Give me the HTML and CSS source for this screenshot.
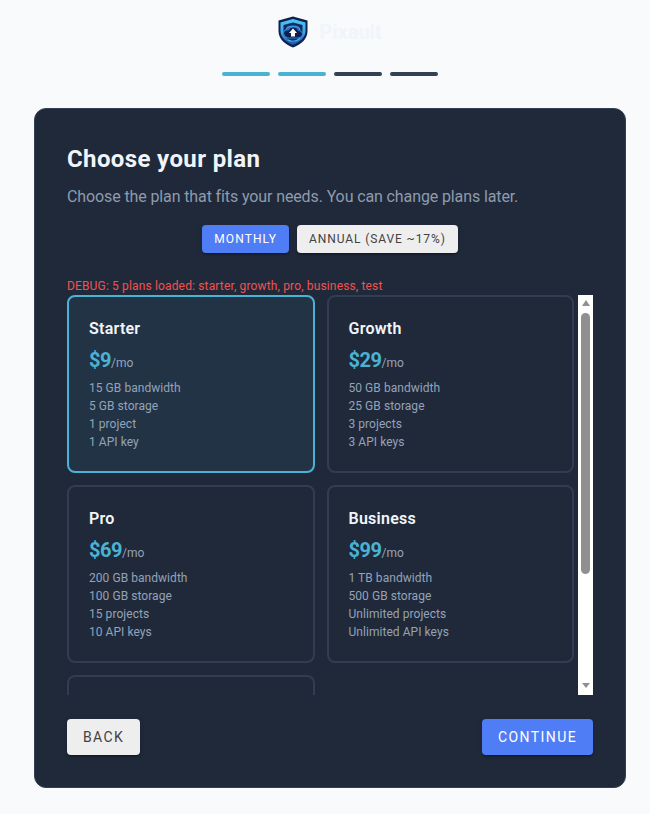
FILE: index.html
```html
<!DOCTYPE html>
<html lang="en">
<head>
<meta charset="utf-8">
<title>Pixault - Choose your plan</title>
<link rel="stylesheet" href="styles.css">
</head>
<body>
<div class="page">
  <header class="brand">
    <svg class="logo" viewBox="0 0 30 32" width="30" height="32" aria-hidden="true">
      <defs>
        <linearGradient id="band" x1="0" y1="0" x2="0" y2="1">
          <stop offset="0" stop-color="#4cc6f5"/>
          <stop offset=".55" stop-color="#38a6ea"/>
          <stop offset="1" stop-color="#1c4fa0"/>
        </linearGradient>
      </defs>
      <path d="M15 .5 L29.500 4.500 V15 C29.500 23 23 28.500 15 31.500 C7 28.500 .5 23 .5 15 V4.500 Z" fill="#10204e"/>
      <path d="M15 3 L27.500 6.500 V15 C27.500 21.500 21.500 26.300 15 29 C8.500 26.300 2.500 21.500 2.500 15 V6.500 Z" fill="url(#band)"/>
      <path d="M15 6.500 L24.500 9 V15 C24.500 20 20 24 15 26 C10 24 5.500 20 5.500 15 V9 Z" fill="#14295f"/>
      <path d="M8 14 C9.500 9 20.500 9 22 14" fill="none" stroke="#3fa0e8" stroke-width="1.300"/>
      <path d="M10 22 C7 21.500 5 19 5.500 16.500 C6 14.500 8 13.500 10 14 C11 12 13 11 15 11 C18 11 20 12.500 20.500 14.500 C23 14.500 25 16.500 24.500 19 C24 21 21.500 22 19 22 Z" fill="#10204e" stroke="#2f7fd6" stroke-width="1.200"/>
      <path d="M15 12.500 L19 17 H17 V20.500 H13 V17 H11 Z" fill="#fff"/>
      <path d="M10 24 C13 25.500 18 25.500 22 22.500" fill="none" stroke="#3fb8f0" stroke-width="1.100"/>
    </svg>
    <span class="brand-name">Pixault</span>
  </header>
  <div class="steps">
    <span class="step done"></span>
    <span class="step done"></span>
    <span class="step"></span>
    <span class="step"></span>
  </div>
  <main class="panel">
    <h1>Choose your plan</h1>
    <p class="sub">Choose the plan that fits your needs. You can change plans later.</p>
    <div class="toggle">
      <button class="btn btn-primary btn-sm">Monthly</button>
      <button class="btn btn-light btn-sm btn-annual">Annual (Save ~17%)</button>
    </div>
    <p class="debug">DEBUG: 5 plans loaded: starter, growth, pro, business, test</p>
    <div class="plans-row">
      <div class="plans">
        <article class="plan selected">
          <h2>Starter</h2>
          <div class="price"><strong>$9</strong><span>/mo</span></div>
          <ul><li>15 GB bandwidth</li><li>5 GB storage</li><li>1 project</li><li>1 API key</li></ul>
        </article>
        <article class="plan">
          <h2>Growth</h2>
          <div class="price"><strong>$29</strong><span>/mo</span></div>
          <ul><li>50 GB bandwidth</li><li>25 GB storage</li><li>3 projects</li><li>3 API keys</li></ul>
        </article>
        <article class="plan">
          <h2>Pro</h2>
          <div class="price"><strong>$69</strong><span>/mo</span></div>
          <ul><li>200 GB bandwidth</li><li>100 GB storage</li><li>15 projects</li><li>10 API keys</li></ul>
        </article>
        <article class="plan">
          <h2>Business</h2>
          <div class="price"><strong>$99</strong><span>/mo</span></div>
          <ul><li>1 TB bandwidth</li><li>500 GB storage</li><li>Unlimited projects</li><li>Unlimited API keys</li></ul>
        </article>
        <article class="plan"></article>
      </div>
      <div class="scrollbar" aria-hidden="true">
        <span class="arrow arrow-up"></span>
        <span class="thumb"></span>
        <span class="arrow arrow-down"></span>
      </div>
    </div>
    <div class="actions">
      <button class="btn btn-light btn-lg">Back</button>
      <button class="btn btn-primary btn-lg">Continue</button>
    </div>
  </main>
</div>
</body>
</html>
```
FILE: styles.css
```css
* { box-sizing: border-box; }
html, body { margin: 0; height: 100%; }
body {
  background: #f8fafc;
  font-family: Roboto, "Liberation Sans", sans-serif;
  overflow: hidden;
}
.page {
  display: flex;
  flex-direction: column;
  align-items: center;
  padding: 16px 0 0 10px;
}
.brand {
  display: flex;
  align-items: center;
  gap: 11px;
  height: 32px;
  margin-bottom: 24px;
}
.logo { display: block; }
.brand-name {
  font-size: 20px;
  font-weight: 700;
  color: #f1f5f9;
}
.steps {
  display: flex;
  gap: 8px;
  margin-bottom: 32px;
}
.step {
  width: 48px;
  height: 4px;
  border-radius: 2px;
  background: #334155;
}
.step.done { background: #4ab3d4; }
.panel {
  width: 592px;
  height: 680px;
  background: #20293a;
  border: 1px solid #334155;
  border-radius: 12px;
  padding: 32px;
}
h1 {
  margin: 0 0 8px;
  font-size: 24px;
  line-height: 36px;
  font-weight: 700;
  letter-spacing: .375px;
  color: #f1f5f9;
}
.sub {
  margin: 0 0 16px;
  font-size: 16px;
  line-height: 24px;
  letter-spacing: -.115px;
  color: #8f9bad;
}
.toggle {
  display: flex;
  justify-content: center;
  gap: 8px;
  margin-bottom: 24px;
}
.btn {
  border: 0;
  border-radius: 4px;
  font-family: inherit;
  font-weight: 400;
  text-transform: uppercase;
  box-shadow: 0 3px 1px -2px rgba(0,0,0,.2), 0 2px 2px 0 rgba(0,0,0,.14), 0 1px 5px 0 rgba(0,0,0,.12);
}
.btn-sm {
  height: 28px;
  padding: 0 12px;
  font-size: 12px;
  letter-spacing: 1.1px;
}
.btn-annual { letter-spacing: .9px; }
.btn-lg {
  height: 36px;
  padding: 0 16px;
  font-size: 14px;
  letter-spacing: 1.4px;
}
.btn-primary { background: #4f7df5; color: #fff; }
.btn-light { background: #eeeeee; color: #424242; }
.debug {
  margin: 0;
  font-size: 12px;
  line-height: 18px;
  letter-spacing: .15px;
  color: #ef5350;
}
.plans-row {
  display: flex;
  height: 400px;
}
.plans {
  flex: 1;
  display: grid;
  grid-template-columns: 1fr 1fr;
  grid-auto-rows: 178px;
  gap: 12px;
  padding-right: 4px;
  overflow: hidden;
}
.scrollbar {
  flex: none;
  width: 15px;
  display: flex;
  flex-direction: column;
  align-items: center;
  background: #fff;
}
.arrow {
  width: 0;
  height: 0;
  border-left: 4.500px solid transparent;
  border-right: 4.500px solid transparent;
}
.arrow-up {
  margin: 5px 0 7px;
  border-bottom: 6px solid #909090;
}
.arrow-down {
  margin-top: 109px;
  border-top: 5px solid #909090;
}
.thumb {
  width: 9px;
  height: 261px;
  border-radius: 5px;
  background: #909090;
}
.plan {
  border: 2px solid #313d53;
  border-radius: 8px;
  padding: 20px;
}
.plan.selected {
  border-color: #4ab3d4;
  background: rgba(74, 179, 212, 0.08);
}
h2 {
  margin: 0 0 5px;
  font-size: 16px;
  line-height: 24px;
  font-weight: 600;
  letter-spacing: .25px;
  color: #f1f5f9;
}
.price {
  margin-bottom: 2px;
  line-height: 28px;
  color: #94a3b8;
  font-size: 12px;
}
.price strong {
  font-size: 20px;
  font-weight: 700;
  letter-spacing: -.5px;
  color: #4ab3d4;
}
ul {
  margin: 0;
  padding: 0;
  list-style: none;
}
li {
  font-size: 12px;
  line-height: 18px;
  letter-spacing: .05px;
  color: #94a3b8;
}
.actions {
  display: flex;
  justify-content: space-between;
  margin-top: 24px;
}
```
